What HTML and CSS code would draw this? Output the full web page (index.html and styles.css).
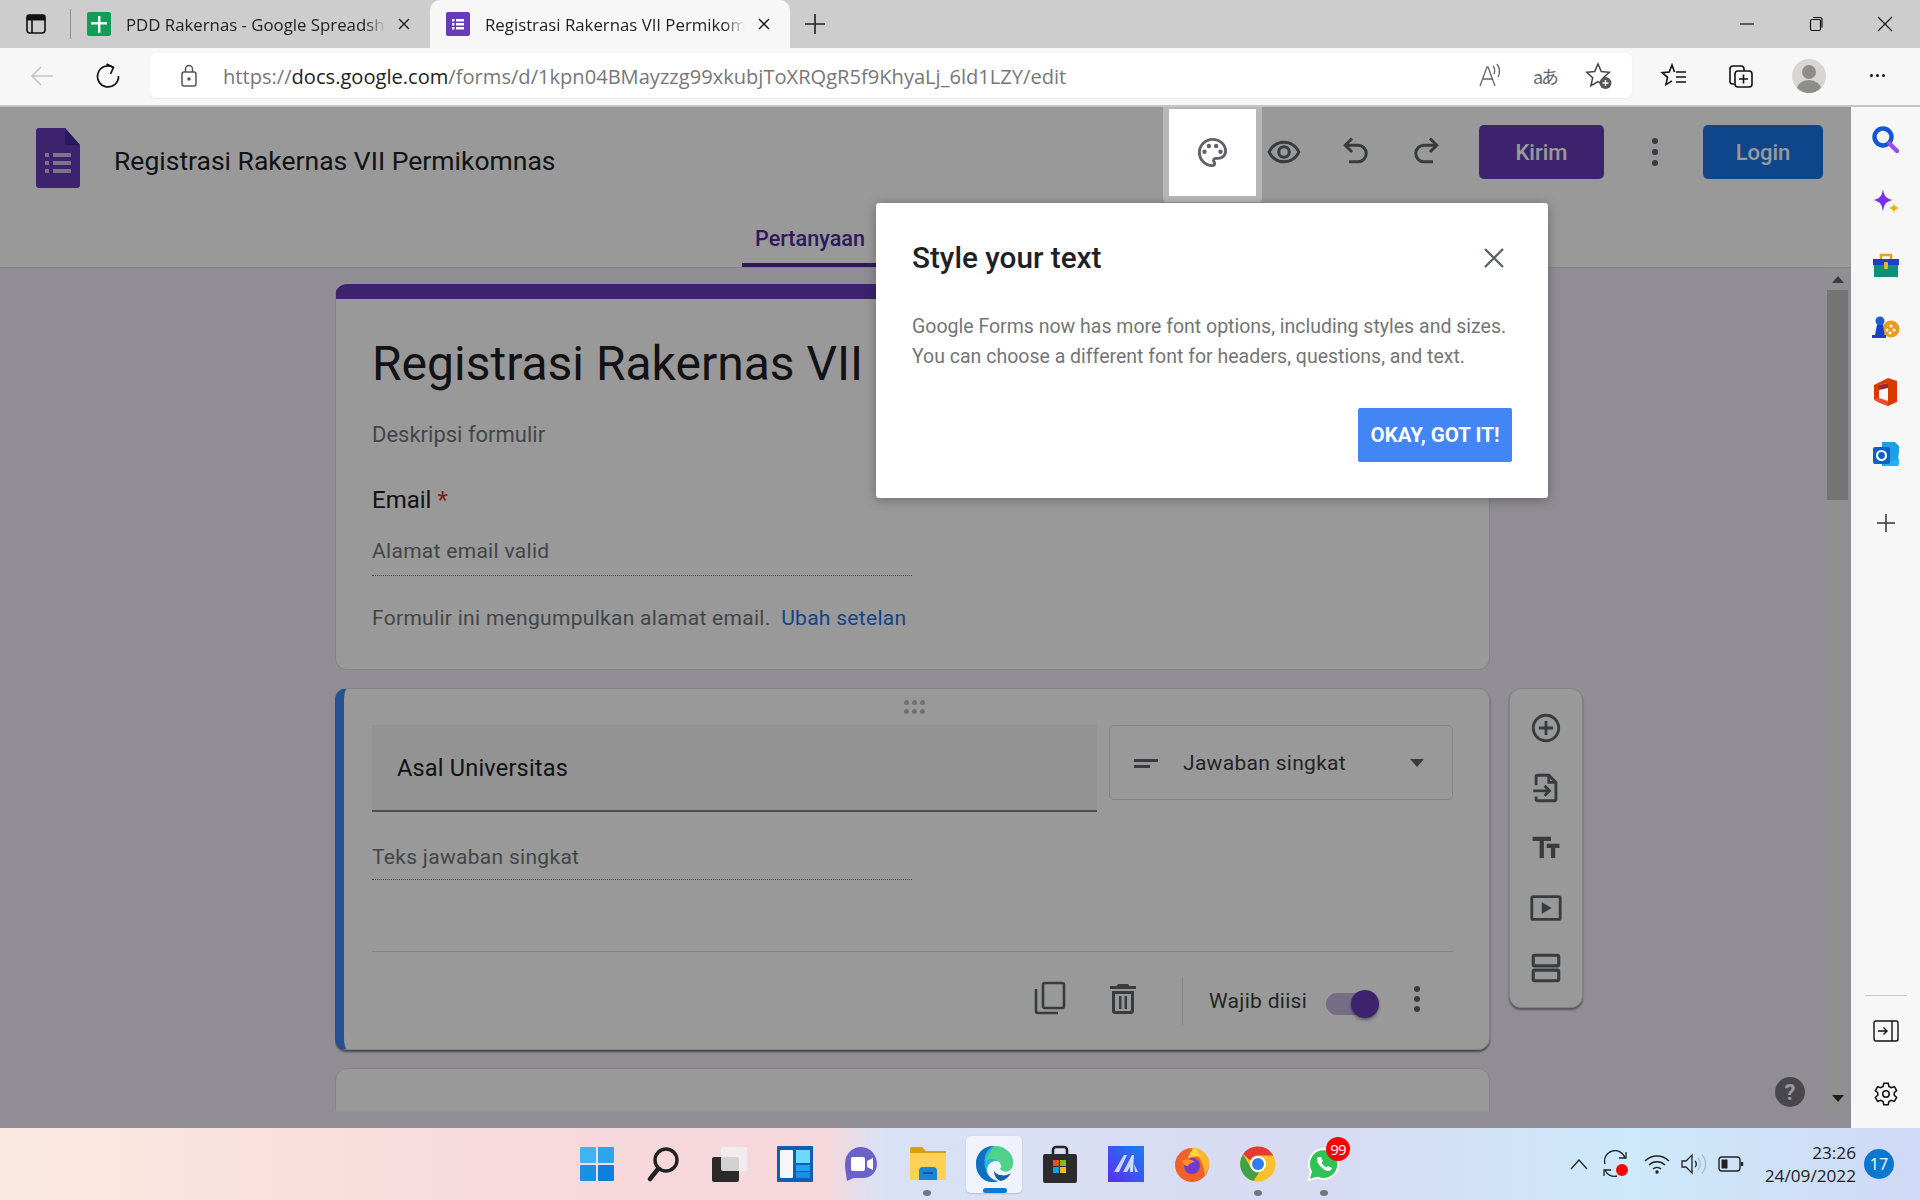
FILE: index.html
```html
<!DOCTYPE html>
<html lang="id">
<head>
  <meta charset="UTF-8" />
  <title>Registrasi Rakernas VII Permikomnas</title>
  <link rel="stylesheet" href="styles.css">
</head>
<body>

  <div class="tabstrip">
    <svg class="tab-toggle" width="24" height="24" viewBox="0 0 24 24" fill="none" stroke="#111" stroke-width="1.6"><rect x="3" y="3" width="18" height="18" rx="3"/><path d="M3 7.5h18M8 7.5V21" stroke-width="1.6"/><path d="M3.5 3.5h17v4h-17z" fill="#111"/></svg>
    <span class="tab-sep"></span>
    <div class="tab">
      <svg class="favicon" width="24" height="24" viewBox="0 0 24 24"><rect width="24" height="24" rx="2" fill="#0f9d58"/><path d="M11 4h2.4v6H20v2.4h-6.6V21H11v-8.6H4V10h7z" fill="#fff"/></svg>
      <span class="tab-title">PDD Rakernas - Google Spreadsheets</span>
      <svg class="tab-close" width="14" height="14" viewBox="0 0 14 14" stroke="#111" stroke-width="1.4"><path d="M2 2l10 10M12 2L2 12"/></svg>
    </div>
    <div class="tab tab-active">
      <svg class="favicon" width="24" height="24" viewBox="0 0 24 24"><rect width="24" height="24" rx="2" fill="#673ab7"/><path d="M6 7h2.4v2.4H6zM10 7h8v2.4h-8zM6 11h2.4v2.4H6zM10 11h8v2.4h-8zM6 15h2.4v2.4H6zM10 15h8v2.4h-8z" fill="#fff"/></svg>
      <span class="tab-title">Registrasi Rakernas VII Permikomnas</span>
      <svg class="tab-close" width="14" height="14" viewBox="0 0 14 14" stroke="#111" stroke-width="1.4"><path d="M2 2l10 10M12 2L2 12"/></svg>
    </div>
    <svg class="tab-new" width="24" height="24" viewBox="0 0 24 24" stroke="#222" stroke-width="1.6"><path d="M12 2v20M2 12h20"/></svg>
    <div class="window-btns">
      <svg width="16" height="16" viewBox="0 0 16 16" stroke="#111" stroke-width="1.2"><path d="M1 8h14"/></svg>
      <svg width="16" height="16" viewBox="0 0 16 16" fill="none" stroke="#111" stroke-width="1.2"><rect x="2.5" y="3.5" width="10" height="11" rx="1.5"/><path d="M5 1.5h7a2 2 0 0 1 2 2v8"/></svg>
      <svg width="16" height="16" viewBox="0 0 16 16" stroke="#111" stroke-width="1.2"><path d="M1 1l14 14M15 1L1 15"/></svg>
    </div>
  </div>

  <div class="toolbar">
    <svg class="nav-back" width="26" height="26" viewBox="0 0 26 26" fill="none" stroke="#c4c4c4" stroke-width="1.6"><path d="M24 13H3M12 4l-9 9 9 9"/></svg>
    <svg class="nav-reload" width="26" height="26" viewBox="0 0 26 26" fill="none" stroke="#111" stroke-width="1.7"><path d="M18.500 4.500A10.500 10.500 0 1 0 23.500 13"/><path d="M11.500 1 18.500 4.500 15.500 11"/></svg>
    <div class="address">
      <svg class="lock" width="20" height="24" viewBox="0 0 20 24" fill="none" stroke="#555" stroke-width="1.5"><rect x="3" y="8" width="14" height="14" rx="2"/><path d="M6.500 8V5a3.500 3.500 0 0 1 7 0v3"/><circle cx="10" cy="15" r="1" fill="#555"/></svg>
      <span class="url"><span class="url-dim">https://</span>docs.google.com<span class="url-dim">/forms/d/1kpn04BMayzzg99xkubjToXRQgR5f9KhyaLj_6ld1LZY/edit</span></span>
      <div class="address-icons">
        <svg width="28" height="28" viewBox="0 0 28 28" fill="none" stroke="#666" stroke-width="1.3"><path d="M3 24 10 5h1l7 19M5.500 17h10"/><path d="M16 4c2 2 2 5 1 8M20 2c3 4 3 9 1 13"/></svg>
        <span class="translate">aあ</span>
        <svg width="28" height="28" viewBox="0 0 28 28"><path d="M13 2l3.300 7.600 8 .7-6 5.400 1.800 8-7.100-4.200-7.100 4.200 1.800-8-6-5.400 8-.7z" fill="none" stroke="#444" stroke-width="1.500"/><circle cx="20.500" cy="21" r="6" fill="#555"/><path d="M20.500 18v6M17.500 21h6" stroke="#fff" stroke-width="1.400"/></svg>
      </div>
    </div>
    <div class="toolbar-icons">
      <svg width="28" height="28" viewBox="0 0 28 28" fill="none" stroke="#111" stroke-width="1.600"><path d="M14.500 10 12 3 9.200 10l-7 .6 5.300 4.700-1.600 7.300 6.100-3.700"/><path d="M16 10h10M16 15h10M16 20h10"/></svg>
      <svg width="28" height="28" viewBox="0 0 28 28" fill="none" stroke="#111" stroke-width="1.600"><path d="M7 22H5.500A2.500 2.500 0 0 1 3 19.500V7a3 3 0 0 1 3-3h8a3 3 0 0 1 3 3v2"/><rect x="8" y="9" width="17" height="16" rx="3"/><path d="M16.500 12.500v9M12 17h9"/></svg>
      <div class="avatar"><span class="avatar-head"></span><span class="avatar-body"></span></div>
      <div class="ellipsis"><i></i><i></i><i></i></div>
    </div>
  </div>

  <div class="main">
    <div class="page">
      <header class="form-head">
        <div class="head-row">
          <svg class="forms-logo" width="44" height="60" viewBox="0 0 44 60"><path d="M3 0h26l15 17v40a3 3 0 0 1-3 3H3a3 3 0 0 1-3-3V3a3 3 0 0 1 3-3z" fill="#673ab7"/><path d="M29 0l15 17H29z" fill="#4527a0"/><path d="M9 25h4v4H9zM17 25h18v4H17zM9 33h4v4H9zM17 33h18v4H17zM9 41h4v4H9zM17 41h18v4H17z" fill="#d1c4e9"/></svg>
          <div class="doc-title">Registrasi Rakernas VII Permikomnas</div>
          <div class="head-actions">
            <span class="palette-btn">
              <svg width="35" height="35" viewBox="0 0 24 24" fill="#5f6368"><path d="M12 22C6.490 22 2 17.510 2 12S6.490 2 12 2s10 4.040 10 9c0 3.310-2.690 6-6 6h-1.770c-.28 0-.5.220-.5.500 0 .12.050.23.130.33.410.47.640 1.060.640 1.670 0 1.380-1.120 2.500-2.500 2.500zm0-18c-4.410 0-8 3.590-8 8s3.590 8 8 8c.28 0 .5-.22.5-.5 0-.16-.08-.28-.14-.35-.41-.46-.63-1.050-.63-1.650 0-1.380 1.120-2.500 2.500-2.500H16c2.210 0 4-1.790 4-4 0-3.860-3.590-7-8-7z"/><circle cx="6.500" cy="11.500" r="1.500"/><circle cx="9.500" cy="7.500" r="1.500"/><circle cx="14.500" cy="7.500" r="1.500"/><circle cx="17.500" cy="11.500" r="1.500"/></svg>
            </span>
            <svg class="head-icon eye" width="36" height="36" viewBox="0 0 24 24" fill="#5f6368"><path d="M12 6.500c3.790 0 7.170 2.130 8.820 5.500-1.650 3.370-5.020 5.500-8.820 5.500S4.830 15.370 3.180 12C4.830 8.630 8.210 6.500 12 6.500m0-2C7 4.500 2.730 7.610 1 12c1.730 4.390 6 7.500 11 7.500s9.270-3.110 11-7.500c-1.730-4.390-6-7.500-11-7.500zm0 5a2.500 2.500 0 0 1 0 5 2.500 2.500 0 0 1 0-5m0-2c-2.480 0-4.500 2.020-4.500 4.500s2.020 4.500 4.500 4.500 4.500-2.020 4.500-4.500-2.020-4.500-4.500-4.500z"/></svg>
            <svg class="head-icon undo" width="36" height="36" viewBox="0 0 24 24" fill="none" stroke="#5f6368" stroke-width="2"><path d="M10 3 5.500 7.500 10 12"/><path d="M6 7.500h8a5.500 5.500 0 0 1 0 11H8"/></svg>
            <svg class="head-icon redo" width="36" height="36" viewBox="0 0 24 24" fill="none" stroke="#5f6368" stroke-width="2"><path d="M14 3l4.500 4.500L14 12"/><path d="M18 7.500h-8a5.500 5.500 0 0 0 0 11h6"/></svg>
            <button class="btn-send">Kirim</button>
            <div class="kebab head-kebab"><i></i><i></i><i></i></div>
            <button class="btn-login">Login</button>
          </div>
        </div>
        <nav class="form-tabs">
          <span class="form-tab">Pertanyaan</span>
        </nav>
      </header>

      <div class="scroller">
        <div class="form-col">
          <section class="card card-intro">
            <h1 class="form-title">Registrasi Rakernas VII</h1>
            <div class="form-desc">Deskripsi formulir</div>
            <div class="email-label">Email <span class="req">*</span></div>
            <div class="email-input">Alamat email valid</div>
            <div class="collect-note">Formulir ini mengumpulkan alamat email. <a class="link">Ubah setelan</a></div>
          </section>

          <div class="question-row">
            <section class="card card-question">
              <div class="drag"><i></i><i></i><i></i><i></i><i></i><i></i></div>
              <div class="q-top">
                <div class="q-input">Asal Universitas</div>
                <div class="q-type">
                  <svg width="28" height="28" viewBox="0 0 28 28" fill="#5f6368"><path d="M2 10h24v3H2zM2 16h16v3H2z"/></svg>
                  <span>Jawaban singkat</span>
                  <span class="caret"></span>
                </div>
              </div>
              <div class="q-answer">Teks jawaban singkat</div>
              <div class="q-foot">
                <svg class="foot-icon" width="32" height="34" viewBox="0 0 32 34" fill="none" stroke="#5f6368" stroke-width="2.600"><rect x="9" y="2" width="21" height="25" rx="2"/><path d="M2 8v22a2 2 0 0 0 2 2h20"/></svg>
                <svg class="foot-icon" width="26" height="30" viewBox="0 0 26 30" fill="#5f6368"><path d="M8 0h10l1.500 2H26v3H0V2h6.500zM2 7h22v20a3 3 0 0 1-3 3H5a3 3 0 0 1-3-3zm3 3v16a1 1 0 0 0 1 1h14a1 1 0 0 0 1-1V10zM9 12h2.500v13H9zM14.500 12H17v13h-2.500z" fill-rule="evenodd"/></svg>
                <span class="foot-sep"></span>
                <span class="required">Wajib diisi</span>
                <span class="switch"><span class="switch-knob"></span></span>
                <div class="kebab"><i></i><i></i><i></i></div>
              </div>
            </section>

            <aside class="side-tools">
              <svg width="34" height="34" viewBox="0 0 24 24" fill="#5f6368"><path d="M13 7h-2v4H7v2h4v4h2v-4h4v-2h-4V7zm-1-5C6.490 2 2 6.490 2 12s4.490 10 10 10 10-4.490 10-10S17.510 2 12 2zm0 18c-4.410 0-8-3.590-8-8s3.590-8 8-8 8 3.590 8 8-3.590 8-8 8z"/></svg>
              <svg width="34" height="34" viewBox="0 0 24 24" fill="none" stroke="#5f6368" stroke-width="2"><path d="M5 10V4a1 1 0 0 1 1-1h8l5 5v12a1 1 0 0 1-1 1H6a1 1 0 0 1-1-1v-2"/><path d="M14 3v5h5"/><path d="M3 14h11M11 10.500l3.500 3.500-3.500 3.500"/></svg>
              <svg width="34" height="34" viewBox="0 0 24 24" fill="#5f6368"><path d="M2.500 4v3h5v12h3V7h5V4h-13zm19 5h-9v3h3v7h3v-7h3V9z"/></svg>
              <svg width="34" height="34" viewBox="0 0 24 24" fill="#5f6368"><path d="M21 3H3a2 2 0 0 0-2 2v14a2 2 0 0 0 2 2h18a2 2 0 0 0 2-2V5a2 2 0 0 0-2-2zm0 16H3V5h18zM9 8v8l7-4z"/></svg>
              <svg width="34" height="34" viewBox="0 0 24 24" fill="none" stroke="#5f6368" stroke-width="2.200"><rect x="3" y="3" width="18" height="7.500" rx="1"/><rect x="3" y="13.500" width="18" height="7.500" rx="1"/></svg>
            </aside>
          </div>

          <section class="card card-next"></section>
        </div>
        <div class="scrollbar">
          <span class="sb-up"></span>
          <span class="sb-thumb"></span>
          <span class="sb-down"></span>
        </div>
        <span class="help">?</span>
      </div>

      <div class="scrim"></div>

      <div class="dialog">
        <div class="dialog-head">
          <h2>Style your text</h2>
          <svg width="24" height="24" viewBox="0 0 24 24" stroke="#5f6368" stroke-width="2.400"><path d="M3 3l18 18M21 3 3 21"/></svg>
        </div>
        <p>Google Forms now has more font options, including styles and sizes. You can choose a different font for headers, questions, and text.</p>
        <div class="dialog-foot"><button class="btn-ok">OKAY, GOT IT!</button></div>
      </div>
    </div>

    <aside class="edge-side">
      <svg width="30" height="30" viewBox="0 0 30 30" fill="none"><circle cx="12" cy="12" r="8.500" stroke="#1456d8" stroke-width="4.500"/><path d="M18.500 18.500l7.500 7.500" stroke="#9a4ee8" stroke-width="4.500" stroke-linecap="round"/></svg>
      <svg width="30" height="30" viewBox="0 0 30 30"><path d="M12 1c1 7 3 9.500 10 11-7 1.500-9 4-10 12-1-8-3-10.500-10-12 7-1.500 9-4 10-11z" fill="#7a2ff0"/><path d="M23 15c.4 3 1.500 4 5 5-3.500 1-4.600 2-5 6-.4-4-1.500-5-5-6 3.500-1 4.600-2 5-5z" fill="#f2a900"/></svg>
      <svg width="30" height="30" viewBox="0 0 30 30"><path d="M10 8V4h10v4" fill="none" stroke="#e8a21a" stroke-width="2.500"/><path d="M3 10h24v16H3z" fill="#0f8f78"/><path d="M2 8h26v6H2z" fill="#1c3fd0"/><rect x="13" y="11" width="4" height="7" rx="1" fill="#f2b322"/></svg>
      <svg width="30" height="30" viewBox="0 0 30 30"><circle cx="20" cy="15" r="8.500" fill="#e89b1c"/><circle cx="20" cy="12" r="1.500" fill="#fff"/><circle cx="16" cy="16" r="1.500" fill="#fff"/><circle cx="23" cy="16" r="1.500" fill="#fff"/><circle cx="19" cy="19" r="1.500" fill="#fff"/><circle cx="9" cy="7" r="4.500" fill="#1a5fd0"/><path d="M6 11h6l1.500 10H15v3H1v-3h3z" fill="#1740c8"/></svg>
      <svg width="30" height="30" viewBox="0 0 30 30"><path d="M17 1l9 3v21l-9 4-13-5 13 2V6L8 8v13l-5 2V8z" fill="#d83b01"/><path d="M8 8l9-2v5l-9 2z" fill="#a4262c"/><path d="M3 23l5-2 9 3v5z" fill="#ee4b2b"/></svg>
      <svg width="30" height="30" viewBox="0 0 30 30"><path d="M11 2h13l4 4v6l-2 14H11z" fill="#1aa0e8"/><path d="M28 12v12a2 2 0 0 1-2 2H11l17-8" fill="#27b0f0"/><rect x="2" y="7" width="17" height="17" rx="2" fill="#0a63c0"/><circle cx="10.500" cy="15.500" r="4.500" fill="none" stroke="#fff" stroke-width="2.200"/></svg>
      <svg class="side-plus" width="20" height="20" viewBox="0 0 20 20" stroke="#333" stroke-width="1.500"><path d="M10 1v18M1 10h18"/></svg>
      <div class="edge-bottom">
        <span class="edge-rule"></span>
        <svg width="26" height="22" viewBox="0 0 26 22" fill="none" stroke="#111" stroke-width="1.400"><rect x="1" y="1" width="24" height="20" rx="2"/><path d="M19 1v20M5 11h9M10.500 7.500 14 11l-3.500 3.500"/></svg>
        <svg width="26" height="28" viewBox="0 0 24 24" fill="none" stroke="#111" stroke-width="1.400"><circle cx="12" cy="12" r="3"/><path d="M10 2h4l.7 3 2.100 1.200 3-.9 2 3.500-2.200 2.100v2.200l2.200 2.100-2 3.500-3-.9-2.100 1.200-.7 3h-4l-.7-3-2.100-1.200-3 .9-2-3.500 2.200-2.100v-2.200L2.200 8.800l2-3.500 3 .9 2.100-1.200z"/></svg>
      </div>
    </aside>
  </div>

  <footer class="taskbar">
    <div class="task-apps">
      <span class="app">
        <svg width="36" height="36" viewBox="0 0 36 36"><rect x="1" y="1" width="16" height="16" rx="1" fill="#3fb4f2"/><rect x="19" y="1" width="16" height="16" rx="1" fill="#2ba5ec"/><rect x="1" y="19" width="16" height="16" rx="1" fill="#1b90e2"/><rect x="19" y="19" width="16" height="16" rx="1" fill="#0c7fda"/></svg>
      </span>
      <span class="app">
        <svg width="36" height="36" viewBox="0 0 36 36" fill="none" stroke="#222" stroke-width="3.400"><circle cx="21" cy="14" r="11"/><path d="M13 23 5 33" stroke-width="4.500" stroke-linecap="round"/></svg>
      </span>
      <span class="app">
        <svg width="36" height="36" viewBox="0 0 36 36"><rect x="1" y="11" width="27" height="25" rx="2" fill="#2a2a2a"/><rect x="10" y="1" width="26" height="24" rx="2" fill="#f0f0f0" opacity=".85"/></svg>
      </span>
      <span class="app">
        <svg width="36" height="36" viewBox="0 0 36 36"><rect width="36" height="36" rx="1" fill="#0e5fb4"/><rect x="3" y="4" width="13" height="28" rx="1" fill="#f4f6f8"/><rect x="19" y="4" width="14" height="13" fill="#6fd8ff"/><rect x="19" y="19" width="14" height="6" fill="#1fa2f0"/><rect x="19" y="26" width="14" height="6" fill="#1b8fe6"/></svg>
      </span>
      <span class="app">
        <svg width="36" height="36" viewBox="0 0 36 36"><path d="M18 1C8 1 2 9 2 18c0 5 1 10 2 17 4-2 6-3 8-3h8c8 0 14-6 14-14S28 1 18 1z" fill="#6b62c8"/><rect x="8" y="11" width="14" height="14" rx="2" fill="#fff"/><path d="M24 15l6-3v12l-6-3z" fill="#fff"/></svg>
      </span>
      <span class="app app-open">
        <svg width="36" height="36" viewBox="0 0 36 36"><path d="M0 3a2 2 0 0 1 2-2h10l4 4h20v6H0z" fill="#d9a012"/><path d="M0 7h36v27H0z" fill="#fdd254"/><path d="M9 25a4 4 0 0 1 4-4h10a4 4 0 0 1 4 4v9H9z" fill="#1a85d6"/><path d="M13 27h10" stroke="#0c5aa0" stroke-width="2"/></svg>
      </span>
      <span class="app app-active">
        <svg width="38" height="38" viewBox="0 0 38 38"><path d="M19 1C8 1 1 9 1 19c0 11 9 18 16 18 3 0 5-1 6-1-6-1-11-5-11-11 0-5 4-9 9-9 4 0 7 3 7 5 0 1-1 2-3 2 1 3 5 4 9 2 3-2 4-5 4-8C38 8 30 1 19 1z" fill="#2bb4d8"/><path d="M19 1c10 0 19 7 19 17 0 3-1 6-4 8-3 1-6 1-8-1 1-3 0-7-3-9-4-3-9-3-13 0C13 10 16 6 19 1z" fill="#4fd38b"/><path d="M1 19C1 9 8 1 19 1 11 4 8 12 10 22c1 7 6 13 13 14-1 1-4 1-6 1C9 37 1 30 1 19z" fill="#0f6fc4"/><path d="M26 36c4-1 8-4 10-8-3 2-7 3-10 2-3 0-6-2-7-4 0 5 3 9 7 10z" fill="#155fa8"/></svg>
        <span class="active-bar"></span>
      </span>
      <span class="app">
        <svg width="36" height="38" viewBox="0 0 36 38"><path d="M11 10V5a3 3 0 0 1 3-3h8a3 3 0 0 1 3 3v5" fill="none" stroke="#222" stroke-width="2.600"/><rect x="1" y="9" width="34" height="29" rx="2" fill="#2c2c2c"/><rect x="11" y="15" width="6" height="6" fill="#e8501e"/><rect x="18" y="15" width="6" height="6" fill="#7fbb1f"/><rect x="11" y="22" width="6" height="6" fill="#08a4ef"/><rect x="18" y="22" width="6" height="6" fill="#fdb813"/></svg>
      </span>
      <span class="app">
        <svg width="36" height="36" viewBox="0 0 36 36"><defs><linearGradient id="mail" x1="0" y1="1" x2="1" y2="0"><stop offset="0" stop-color="#5a2df0"/><stop offset="1" stop-color="#1a80f0"/></linearGradient></defs><rect width="36" height="36" fill="url(#mail)"/><path d="M6 26 16 9h3L11 26zM15 26 24 9h2l-1 17h-3v-5l-3 5zM27 26l-1-8 4 8z" fill="#cfd8f5"/></svg>
      </span>
      <span class="app">
        <svg width="36" height="38" viewBox="0 0 36 38"><circle cx="18" cy="20" r="17" fill="#f2602c"/><path d="M18 3c7 0 12 3 16 9 2 6 1 13-3 18-1-9-4-17-13-27z" fill="#ffb628"/><path d="M21 0c1 5 3 9 8 13-5-2-11-2-15 1 1-6 5-9 7-14z" fill="#ffd83f"/><circle cx="18" cy="21" r="8" fill="#6e3ccf"/><path d="M8 16c4-3 10-2 13 1-3 0-5 1-7 4-3 0-5-2-6-5z" fill="#ff8f2c"/></svg>
      </span>
      <span class="app app-open">
        <svg width="36" height="36" viewBox="0 0 36 36"><circle cx="18" cy="18" r="17.500" fill="#fbc02d"/><path d="M18 .5A17.500 17.500 0 0 1 33.200 9.500H18a8.500 8.500 0 0 0-7.800 5L3.200 8A17.500 17.500 0 0 1 18 .5z" fill="#e53935"/><path d="M3 8.300 11 22a8.500 8.500 0 0 0 8 4.400L13.500 35A17.500 17.500 0 0 1 3 8.300z" fill="#43a047"/><circle cx="18" cy="18" r="8" fill="#fff"/><circle cx="18" cy="18" r="6" fill="#2e7df0"/></svg>
      </span>
      <span class="app app-open">
        <svg width="36" height="36" viewBox="0 0 36 36"><path d="M18 3a15 15 0 0 0-13 22.500L2.500 34l8.800-2.300A15 15 0 1 0 18 3z" fill="#31c255" stroke="#fff" stroke-width="2"/><path d="M12 11c-2 2-1 6 3 10s8 5 10 3l1-2-4-2-1.500 1.500c-2-1-4-3-5-5l1.500-1.500-2-4z" fill="#fff"/></svg>
        <span class="wa-badge">99</span>
      </span>
    </div>
    <div class="tray">
      <svg class="tray-caret" width="20" height="12" viewBox="0 0 20 12" fill="none" stroke="#222" stroke-width="1.300"><path d="M2 11l8-9 8 9"/></svg>
      <span class="tray-sync">
        <svg width="28" height="28" viewBox="0 0 28 28" fill="none" stroke="#222" stroke-width="1.300"><path d="M4 14A10 10 0 0 1 24 8M25 2v6h-7M4 20a10 10 0 0 0 12 6M3 26v-6h7"/></svg>
        <i></i>
      </span>
      <svg class="tray-wifi" width="26" height="20" viewBox="0 0 26 20" fill="none" stroke="#222" stroke-width="1.500"><path d="M1 7a17 17 0 0 1 24 0M5 11a11.500 11.500 0 0 1 16 0M9 15a6 6 0 0 1 8 0"/><circle cx="13" cy="18" r="1" fill="#222"/></svg>
      <svg class="tray-vol" width="26" height="22" viewBox="0 0 26 22" fill="none" stroke="#222" stroke-width="1.300"><path d="M1 8v6h4l6 6V2L5 8z"/><path d="M14 8a4 4 0 0 1 0 6"/><path d="M17 5a9 9 0 0 1 0 12M21 2a13 13 0 0 1 0 18" stroke="#a9b8c8"/></svg>
      <svg class="tray-bat" width="26" height="16" viewBox="0 0 26 16" fill="none" stroke="#222" stroke-width="1.400"><rect x="1" y="1" width="21" height="14" rx="3"/><rect x="3.500" y="3.500" width="6" height="9" fill="#222" stroke="none"/><path d="M24 6v4" stroke-width="2.400"/></svg>
      <div class="clock"><div>23:26</div><div>24/09/2022</div></div>
      <span class="notif">17</span>
    </div>
  </footer>

</body>
</html>
```
FILE: styles.css
```css
* {
  box-sizing: border-box;
}

body {
  margin: 0;
  width: 1920px;
  height: 1200px;
  overflow: hidden;
  display: flex;
  flex-direction: column;
  font-family: 'Roboto', sans-serif;
  color: #202124;
}

/* browser chrome */
.tabstrip {
  height: 48px;
  background: #cdcdcd;
  display: flex;
  align-items: center;
  font-family: 'Open Sans', sans-serif;
  font-size: 16.800px;
  color: #222;
}

.tab-toggle {
  margin-left: 24px;
}

.tab-sep {
  width: 1px;
  height: 30px;
  background: #8e8e8e;
  margin-left: 22px;
}

.tab {
  width: 360px;
  height: 48px;
  display: flex;
  align-items: center;
  padding: 0 19px 0 16px;
}

.tab:nth-child(3) {
  width: 359px;
}

.tab-active {
  background: #f7f7f7;
  border-radius: 10px 10px 0 0;
}

.favicon {
  flex: none;
}

.tab-title {
  margin-left: 15px;
  width: 260px;
  white-space: nowrap;
  overflow: hidden;
  -webkit-mask-image: linear-gradient(to right, #000 92%, transparent);
  mask-image: linear-gradient(to right, #000 92%, transparent);
}

.tab-close {
  margin-left: auto;
}

.tab-new {
  margin-left: 13px;
}

.window-btns {
  margin-left: auto;
  margin-right: 27px;
  display: flex;
  gap: 53px;
}

.toolbar {
  height: 59px;
  background: #f7f7f7;
  border-bottom: 2px solid #c4c4c4;
  padding-bottom: 2px;
  display: flex;
  align-items: center;
  position: relative;
}

.nav-back {
  margin-left: 29px;
}

.nav-reload {
  margin-left: 40px;
}

.address {
  margin-left: 29px;
  width: 1482px;
  height: 45px;
  background: #fff;
  border-radius: 6px;
  box-shadow: 0 1px 2px rgba(0,0,0,0.06);
  display: flex;
  align-items: center;
  padding-left: 29px;
}

.url {
  margin-left: 24px;
  padding-top: 1px;
  font-family: 'Open Sans', sans-serif;
  font-size: 20.100px;
  color: #222;
  white-space: nowrap;
}

.url-dim {
  color: #777;
}

.address-icons {
  margin-left: auto;
  display: flex;
  align-items: center;
  gap: 26px;
  margin-right: 19px;
}

.translate {
  font-family: 'Noto Sans CJK JP', sans-serif;
  font-size: 18px;
  color: #666;
  width: 28px;
  text-align: center;
  white-space: nowrap;
  letter-spacing: -2px;
}

.toolbar-icons {
  margin-left: 28px;
  display: flex;
  align-items: center;
}

.toolbar-icons svg + svg {
  margin-left: 39px;
}

.avatar {
  width: 34px;
  height: 34px;
  border-radius: 50%;
  background: #d8d6d2;
  margin-left: 37px;
  position: relative;
  overflow: hidden;
}

.avatar-head {
  position: absolute;
  left: 10px;
  top: 6px;
  width: 14px;
  height: 14px;
  border-radius: 50%;
  background: #8f8d8a;
}

.avatar-body {
  position: absolute;
  left: 5px;
  top: 21px;
  width: 24px;
  height: 18px;
  border-radius: 50%;
  background: #8f8d8a;
}

.ellipsis {
  margin-left: 44px;
  display: flex;
  gap: 3px;
}

.ellipsis i {
  width: 3px;
  height: 3px;
  border-radius: 50%;
  background: #111;
}

.main {
  flex: 1;
  display: flex;
  min-height: 0;
}

/* the form page */
.page {
  width: 1851px;
  position: relative;
  background: #f0ebf8;
  display: flex;
  flex-direction: column;
}

.form-head {
  height: 161px;
  background: #fff;
  border-bottom: 1px solid #dadce0;
  display: flex;
  flex-direction: column;
  flex: none;
}

.head-row {
  display: flex;
  align-items: center;
  height: 100px;
  padding: 0 28px 0 36px;
  padding-top: 2px;
}

.doc-title {
  margin-left: 34px;
  padding-top: 4px;
  font-size: 26.500px;
  color: #202124;
}

.head-actions {
  margin-left: auto;
  display: flex;
  align-items: center;
  position: relative;
  top: -6px;
}

.palette-btn {
  width: 99px;
  height: 95px;
  margin-top: 5px;
  border: solid rgba(255,255,255,0.3);
  border-width: 2px 6px 6px;
  border-radius: 0 0 4px 4px;
  background: #fff;
  background-clip: padding-box;
  display: flex;
  align-items: center;
  justify-content: center;
  position: relative;
  z-index: 3;
}

.eye {
  margin-left: 4px;
}

.undo {
  margin-left: 35px;
}

.redo {
  margin-left: 36px;
}

.btn-send,
.btn-login {
  width: 125px;
  height: 54px;
  border: none;
  border-radius: 5px;
  background: #673ab7;
  color: #fff;
  font-family: 'Roboto', sans-serif;
  font-size: 22px;
  font-weight: 500;
  margin-left: 34px;
}

.btn-login {
  width: 120px;
  background: #1a73e8;
  margin-left: 45px;
}

.kebab {
  display: flex;
  flex-direction: column;
  gap: 5px;
}

.kebab i {
  width: 6px;
  height: 6px;
  border-radius: 50%;
  background: #5f6368;
}

.head-kebab {
  margin-left: 48px;
}

.form-tabs {
  flex: 1;
  display: flex;
  justify-content: flex-start;
  padding-left: 742px;
  align-items: flex-end;
}

.form-tab {
  width: 134px;
  height: 60px;
  padding: 19px 0 0 13px;
  color: #4d2c9c;
  font-size: 21.600px;
  font-weight: 500;
  border-bottom: 4px solid #4d2a91;
  white-space: nowrap;
}

.scroller {
  flex: 1;
  min-height: 0;
  position: relative;
  overflow: hidden;
  background: #f0ebf8;
}

.form-col {
  width: 1250px;
  margin-left: 335px;
  height: 843px;
  overflow: hidden;
  padding-top: 16px;
  display: flex;
  flex-direction: column;
}

.card {
  width: 1155px;
  background: #fff;
  border: 1px solid #dadce0;
  border-radius: 12px;
  flex: none;
}

.card-intro {
  height: 386px;
  margin-bottom: 18px;
  border-top: 15px solid #673ab7;
  padding: 0 36px;
  overflow: hidden;
}

.form-title {
  margin: 35px 0 0;
  font-size: 48px;
  font-weight: 400;
  line-height: 60px;
  white-space: nowrap;
  color: #202124;
}

.form-desc {
  margin-top: 27px;
  font-size: 22px;
  line-height: 28px;
  color: #70757a;
}

.email-label {
  margin-top: 36px;
  font-size: 24px;
  line-height: 30px;
  color: #202124;
}

.req {
  color: #d93025;
}

.email-input {
  width: 540px;
  height: 50px;
  padding-top: 11px;
  margin-top: 11px;
  font-size: 21px;
  line-height: 28px;
  color: #70757a;
  border-bottom: 1px dotted #70757a;
  letter-spacing: 0.3px;
}

.collect-note {
  margin-top: 28px;
  font-size: 21px;
  line-height: 28px;
  color: #70757a;
  letter-spacing: 0.3px;
  white-space: nowrap;
}

.link {
  color: #1a73e8;
  margin-left: 5px;
}

.question-row {
  display: flex;
  align-items: flex-start;
  gap: 19px;
}

.card-question {
  height: 362px;
  border-left: 9px solid #4285f4;
  box-shadow: 0 2px 2px rgba(0,0,0,0.5);
  padding: 0 36px 0 28px;
  position: relative;
  margin-bottom: 18px;
}

.drag {
  position: absolute;
  left: 560px;
  top: 11px;
  width: 20px;
  display: grid;
  grid-template-columns: repeat(3, 4px);
  gap: 4px;
}

.drag i {
  width: 5px;
  height: 5px;
  border-radius: 50%;
  background: #bdbdbd;
}

.q-top {
  display: flex;
  gap: 12px;
  padding-top: 36px;
}

.q-input {
  width: 725px;
  height: 87px;
  background: #f5f5f5;
  border-bottom: 2px solid #80868b;
  padding: 0 25px;
  display: flex;
  align-items: center;
  font-size: 23.500px;
  color: #202124;
  letter-spacing: 0.2px;
}

.q-type {
  width: 344px;
  height: 75px;
  border: 1px solid #dadce0;
  border-radius: 5px;
  display: flex;
  align-items: center;
  padding: 0 28px 0 22px;
  font-size: 21px;
  letter-spacing: 0.3px;
  color: #3c4043;
}

.q-type span:first-of-type {
  margin-left: 23px;
}

.caret {
  margin-left: auto;
  border: 7.500px solid transparent;
  border-top: 8px solid #5f6368;
  border-bottom: 0;
}

.q-answer {
  width: 540px;
  height: 56px;
  margin-top: 12px;
  padding-top: 19px;
  font-size: 21px;
  line-height: 28px;
  color: #70757a;
  letter-spacing: 0.3px;
  border-bottom: 1px dotted #70757a;
}

.q-foot {
  margin-top: 71px;
  padding-top: 25px;
  border-top: 1px solid #dadce0;
  display: flex;
  align-items: flex-start;
}

.foot-icon {
  margin-left: 662px;
  margin-top: 4px;
  flex: none;
}

.foot-icon + .foot-icon {
  margin-left: 44px;
  margin-top: 7px;
}

.foot-sep {
  width: 1px;
  height: 48px;
  background: #dadce0;
  margin-left: 46px;
}

.required {
  margin-left: 26px;
  margin-top: 12px;
  font-size: 21px;
  color: #3c4043;
  letter-spacing: 0.3px;
  white-space: nowrap;
}

.switch {
  width: 44px;
  height: 22px;
  margin: 16px 0 0 19px;
  border-radius: 11px;
  background: #c4b5e0;
  position: relative;
  flex: none;
}

.switch-knob {
  position: absolute;
  right: -9px;
  top: -3px;
  width: 28px;
  height: 28px;
  border-radius: 50%;
  background: #673ab7;
  box-shadow: 0 2px 3px rgba(0,0,0,0.4);
}

.q-foot .kebab {
  margin: 9px 0 0 44px;
  gap: 4px;
}

.side-tools {
  width: 74px;
  height: 320px;
  background: #fff;
  border: 1px solid #dadce0;
  border-radius: 12px;
  box-shadow: 0 2px 2px rgba(0,0,0,0.4);
  display: flex;
  flex-direction: column;
  align-items: center;
  padding-top: 22px;
  gap: 26px;
}

.card-next {
  height: 100px;
}

.scrollbar {
  position: absolute;
  top: 0;
  bottom: 17px;
  right: 1px;
  width: 25px;
  background: #f1f1f1;
  display: flex;
  flex-direction: column;
  align-items: center;
}

.sb-up {
  margin-top: 8px;
  border: 6px solid transparent;
  border-bottom: 7px solid #5f6368;
  border-top: 0;
}

.sb-thumb {
  margin-top: 7px;
  width: 21px;
  height: 210px;
  background: #c1c1c1;
}

.sb-down {
  margin-top: auto;
  margin-bottom: 9px;
  border: 6px solid transparent;
  border-top: 7px solid #333;
  border-bottom: 0;
}

.help {
  position: absolute;
  left: 1775px;
  bottom: 21px;
  width: 30px;
  height: 30px;
  border-radius: 50%;
  background: #7a7780;
  color: #fff;
  font-size: 22px;
  font-weight: 700;
  display: flex;
  align-items: center;
  justify-content: center;
}

.scrim {
  position: absolute;
  inset: 0;
  background: rgba(0,0,0,0.4);
  z-index: 2;
}

.dialog {
  position: absolute;
  left: 876px;
  top: 96px;
  width: 672px;
  height: 295px;
  background: #fff;
  border-radius: 3px;
  box-shadow: 0 2px 12px rgba(0,0,0,0.3);
  z-index: 4;
  padding: 0 36px;
}

.dialog-head {
  display: flex;
  justify-content: space-between;
  align-items: center;
  padding-top: 35px;
  margin-right: 6px;
}

.dialog h2 {
  margin: 0;
  font-size: 29.700px;
  font-weight: 500;
  line-height: 40px;
  color: #202124;
}

.dialog p {
  margin: 34px 0 0;
  font-size: 19.500px;
  line-height: 30px;
  color: #757575;
}

.dialog-foot {
  display: flex;
  justify-content: flex-end;
  margin-top: 36px;
}

.btn-ok {
  width: 154px;
  height: 54px;
  border: none;
  border-radius: 2px;
  background: #4285f4;
  color: #fff;
  font-family: 'Roboto', sans-serif;
  font-size: 20.500px;
  font-weight: 700;
  padding: 0;
  white-space: nowrap;
}

/* edge sidebar */
.edge-side {
  flex: 1;
  background: #f7f7f7;
  display: flex;
  flex-direction: column;
  align-items: center;
  padding-top: 18px;
  gap: 33px;
  position: relative;
}

.side-plus {
  margin-top: 10px;
}

.edge-bottom {
  margin-top: auto;
  margin-bottom: 20px;
  display: flex;
  flex-direction: column;
  align-items: center;
  gap: 38px;
}

.edge-rule {
  width: 42px;
  height: 1px;
  background: #c8c8c8;
  margin-bottom: -14px;
}

/* windows taskbar */
.taskbar {
  height: 72px;
  flex: none;
  background: linear-gradient(to right, #fbe9e0 0, #f8dadd 25%, #f6d7dc 43%, #d9e2f5 46%, #d8daf2 68%, #cde9fb 85%, #d0d9f5 100%);
  display: flex;
  align-items: center;
  position: relative;
}

.task-apps {
  margin-left: 564px;
  display: flex;
  align-items: center;
}

.app {
  width: 66.100px;
  height: 57px;
  display: flex;
  align-items: center;
  justify-content: center;
  position: relative;
  flex: none;
}

.app-open::after {
  content: "";
  position: absolute;
  left: 29px;
  bottom: -3px;
  width: 8px;
  height: 6px;
  border-radius: 50%;
  background: #6e7680;
}

.app-active {
  background: rgba(255,255,255,0.6);
  border-radius: 5px;
  box-shadow: 0 1px 2px rgba(0,0,0,0.15);
  width: 56px;
  margin: 0 5px;
}

.active-bar {
  position: absolute;
  left: 17px;
  bottom: 0;
  width: 24px;
  height: 5px;
  border-radius: 3px;
  background: #0a78d7;
}

.wa-badge {
  position: absolute;
  left: 35px;
  top: 1px;
  width: 24px;
  height: 24px;
  border-radius: 50%;
  background: #f00;
  color: #fff;
  font-family: 'Open Sans', sans-serif;
  font-size: 15px;
  display: flex;
  align-items: center;
  justify-content: center;
  letter-spacing: -1px;
}

.tray {
  margin-left: auto;
  margin-right: 26px;
  display: flex;
  align-items: center;
}

.tray-sync {
  margin-left: 12px;
  position: relative;
  display: flex;
}

.tray-sync i {
  position: absolute;
  right: 1px;
  bottom: 2px;
  width: 12px;
  height: 12px;
  border-radius: 50%;
  background: #f00;
}

.tray-wifi {
  margin-left: 15px;
}

.tray-vol {
  margin-left: 11px;
}

.tray-bat {
  margin-left: 11px;
}

.clock {
  margin-left: 21px;
  font-family: 'Open Sans', sans-serif;
  font-size: 17.200px;
  line-height: 23px;
  text-align: right;
  color: #1c1c1c;
}

.notif {
  margin-left: 8px;
  width: 30px;
  height: 30px;
  border-radius: 50%;
  background: #0b78d0;
  color: #fff;
  font-family: 'Open Sans', sans-serif;
  font-size: 16px;
  display: flex;
  align-items: center;
  justify-content: center;
}
```
